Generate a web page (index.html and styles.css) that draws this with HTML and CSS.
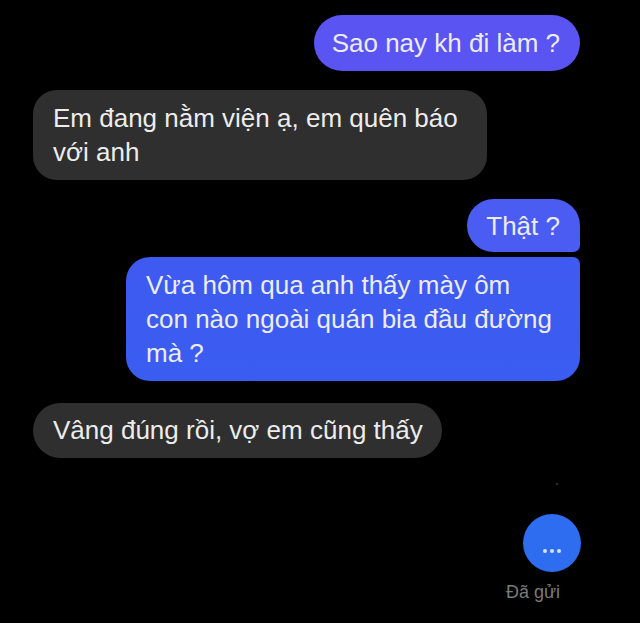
FILE: index.html
```html
<!DOCTYPE html>
<html lang="vi">
<head>
<meta charset="utf-8">
<title>Chat</title>
<link rel="stylesheet" href="styles.css">
</head>
<body>
<main class="chat">
  <div class="msg out solo b1">Sao nay kh đi làm ?</div>
  <div class="msg in b2">Em đang nằm viện ạ, em quên báo với anh</div>
  <div class="msg out first b3">Thật ?</div>
  <div class="msg out last b4">Vừa hôm qua anh thấy mày ôm con nào ngoài quán bia đầu đường mà ?</div>
  <div class="msg in solo b5">Vâng đúng rồi, vợ em cũng thấy</div>
  <span class="speck"></span>
  <div class="typing"><span></span><span></span><span></span></div>
  <div class="status">Đã gửi</div>
</main>
</body>
</html>
```
FILE: styles.css
```css
html, body {
  margin: 0;
  padding: 0;
  background: #000;
}
.chat {
  width: 640px;
  height: 623px;
  box-sizing: border-box;
  padding: 15px 60px 0 33px;
  display: flex;
  flex-direction: column;
  font-family: "Liberation Sans", Arial, sans-serif;
  font-size: 26px;
  line-height: 34px;
  color: #ececec;
}
.msg {
  max-width: 454px;
  box-sizing: border-box;
  padding: 11px 27px 11px 20px;
  border-radius: 26px;
}
.out {
  align-self: flex-end;
}
.in {
  align-self: flex-start;
  background: #2f2f2f;
}
.b1 {
  background: #5a54f3;
  border-radius: 28px;
  padding-right: 20px;
  padding-left: 18px;
}
.b2 {
  margin-top: 19px;
  border-radius: 24px;
}
.b3 {
  margin-top: 19px;
  background: #4b5cf2;
  border-radius: 28px 28px 7px 28px;
  padding: 10px 20px 9px 19px;
}
.b4 {
  margin-top: 5px;
  background: linear-gradient(180deg, #3f5af1 0%, #3a5df1 100%);
  border-radius: 24px 7px 24px 24px;
}
.b5 {
  margin-top: 22px;
  border-radius: 28px;
  padding: 10px 19px 11px 20px;
}
.speck {
  align-self: flex-end;
  width: 2px;
  height: 2px;
  margin: 25px 22px 0 0;
  background: #3a3a3a;
  border-radius: 50%;
}
.typing {
  align-self: flex-end;
  margin-top: 29px;
  margin-right: -1px;
  width: 58px;
  height: 58px;
  border-radius: 50%;
  background: #2e6cf0;
  display: flex;
  align-items: center;
  justify-content: center;
  gap: 3px;
  padding-top: 16px;
  box-sizing: border-box;
}
.typing span {
  width: 4px;
  height: 4px;
  border-radius: 50%;
  background: #d6e3ff;
}
.status {
  align-self: flex-end;
  margin-top: 9px;
  margin-right: 20px;
  font-size: 18px;
  line-height: 22px;
  color: #7a7a7a;
}
```
